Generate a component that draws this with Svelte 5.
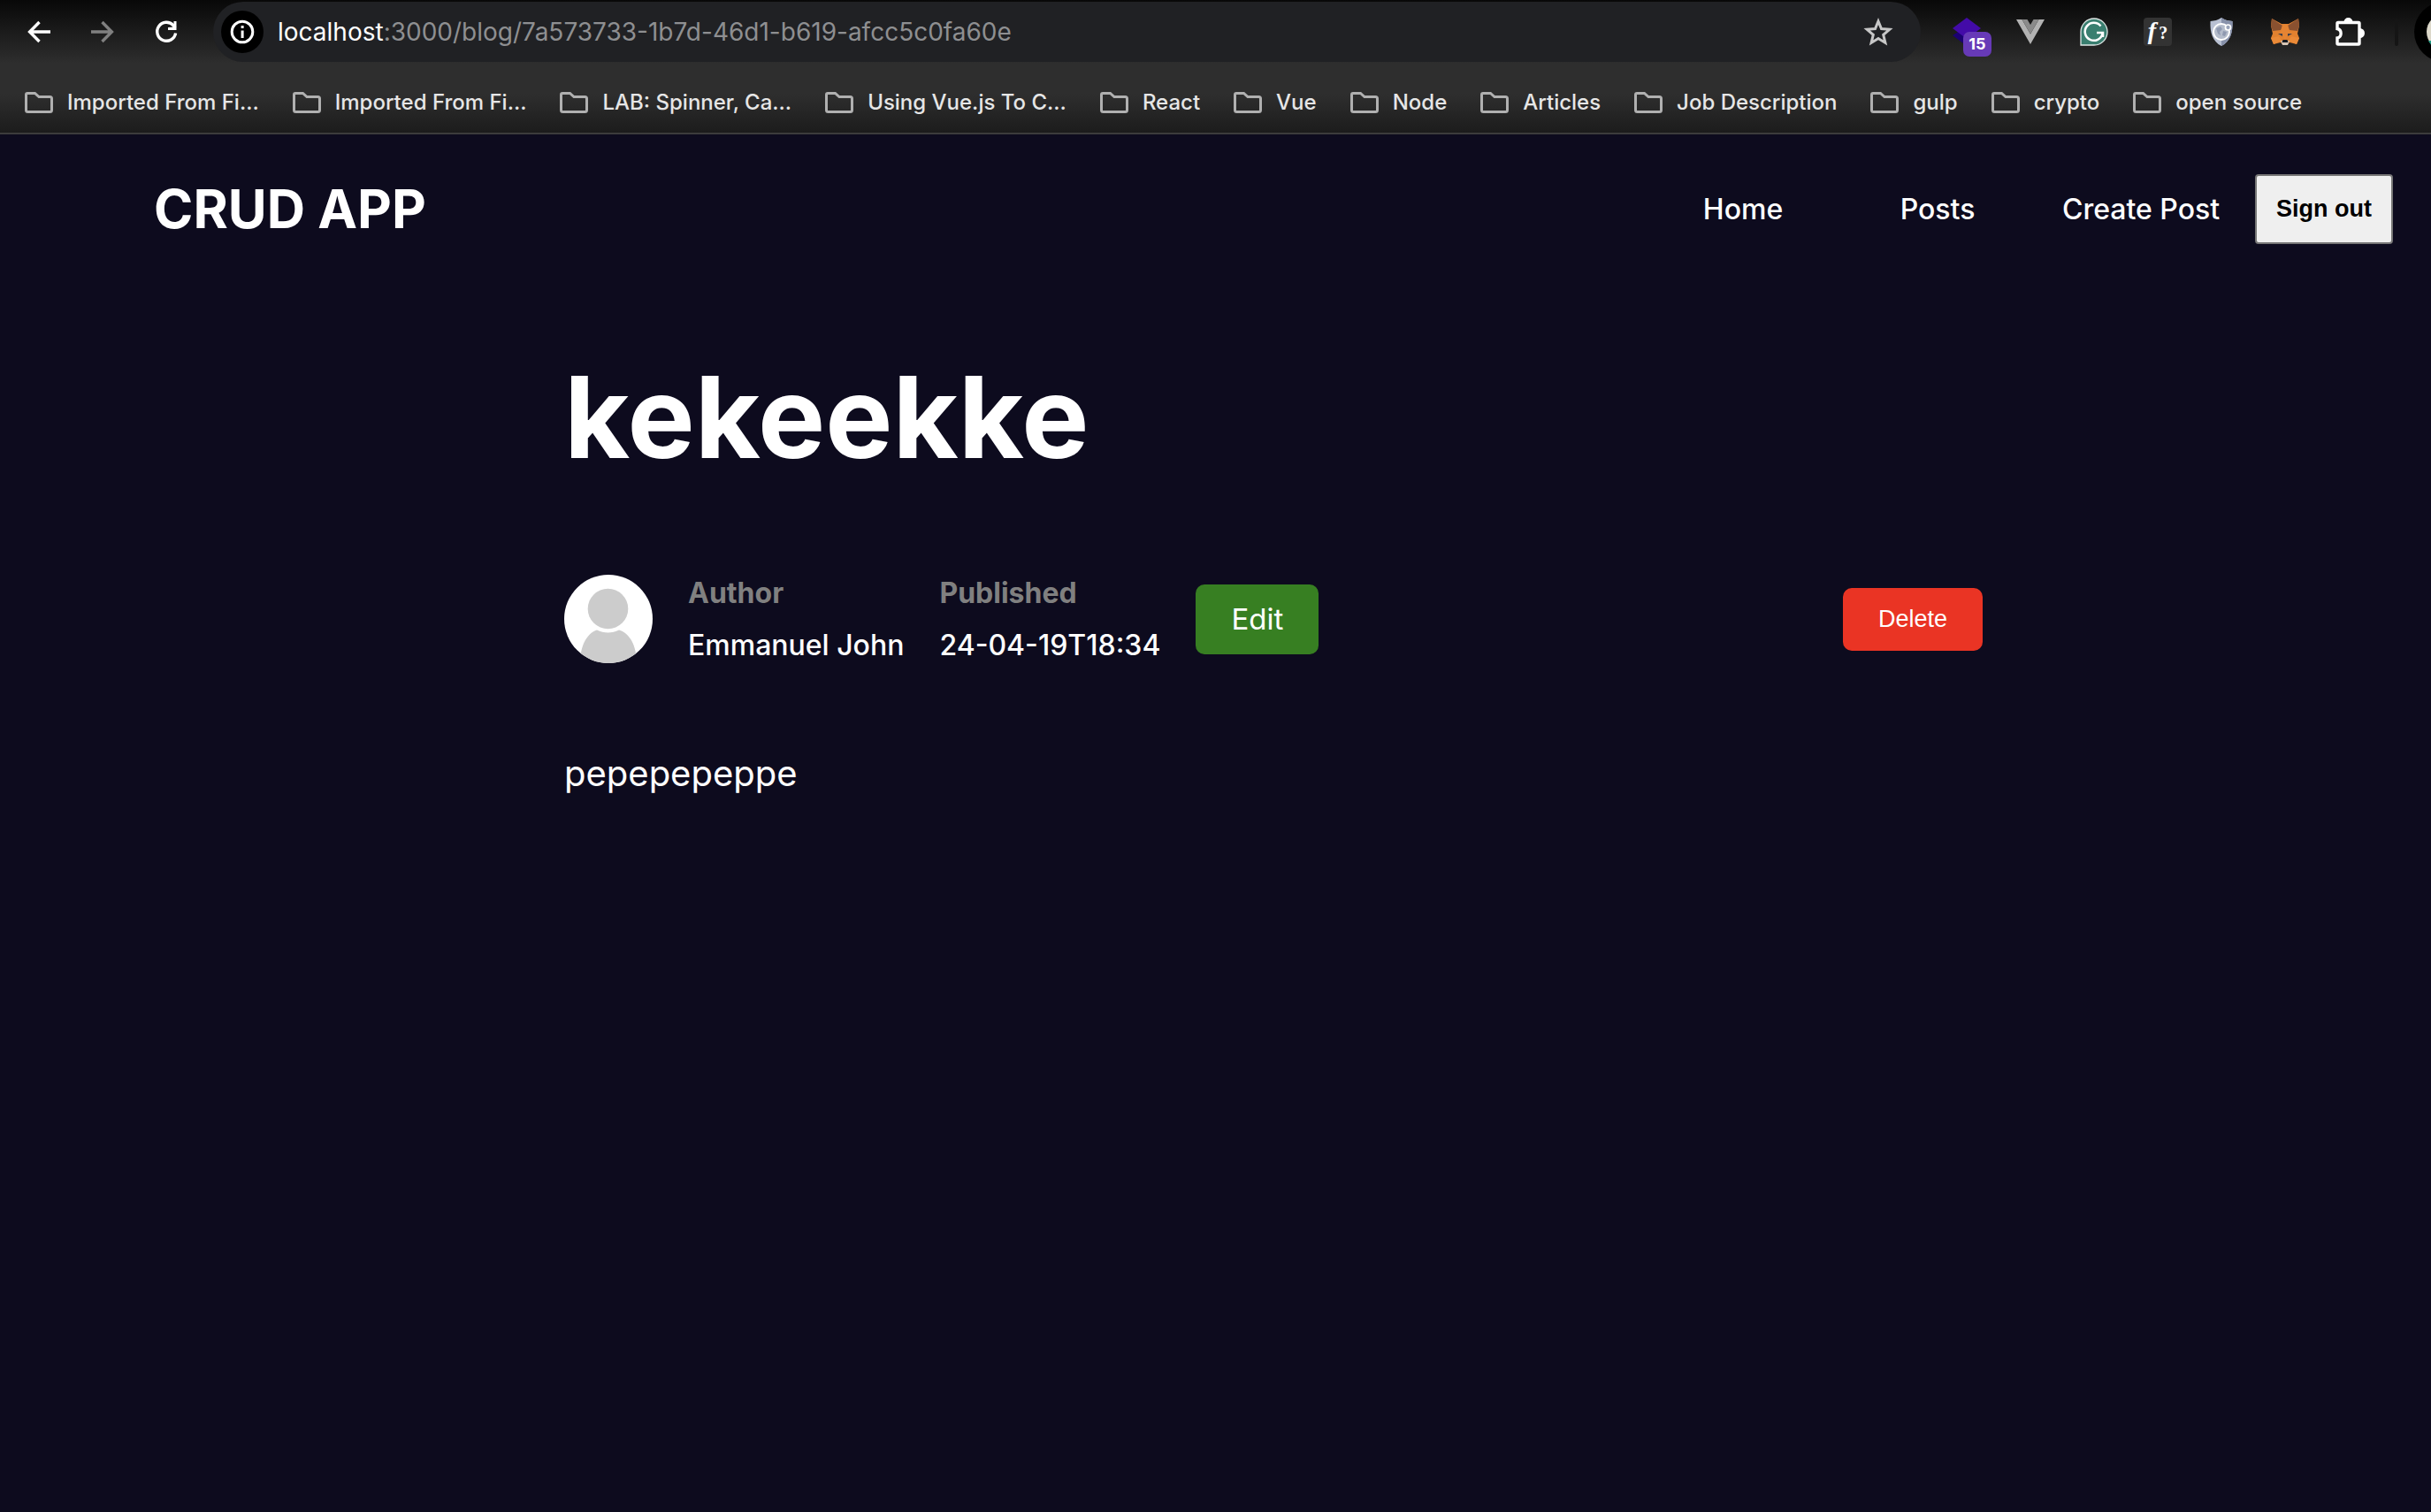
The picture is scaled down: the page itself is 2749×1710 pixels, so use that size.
<script>
  const bookmarks = [
    'Imported From Fi...',
    'Imported From Fi...',
    'LAB: Spinner, Ca...',
    'Using Vue.js To C...',
    'React',
    'Vue',
    'Node',
    'Articles',
    'Job Description',
    'gulp',
    'crypto',
    'open source'
  ];
  const post = {
    title: 'kekeekke',
    author: 'Emmanuel John',
    published: '24-04-19T18:34',
    body: 'pepepepeppe'
  };
</script>

<div class="browser">
  <div class="toolbar">
    <div class="controls">
      <button class="icon" aria-label="Back">
        <svg width="32" height="32" viewBox="0 0 32 32" fill="none" stroke="#fff" stroke-width="3.4"><path d="M29 16H6M16.5 5L5.6 16l10.900 11" /></svg>
      </button>
      <button class="icon" aria-label="Forward">
        <svg width="32" height="32" viewBox="0 0 32 32" fill="none" stroke="#808080" stroke-width="3.400"><path d="M3 16h23M15.500 5l10.900 11-10.900 11" /></svg>
      </button>
      <button class="icon" aria-label="Reload">
        <svg width="32" height="32" viewBox="0 0 32 32" fill="none" stroke="#fff" stroke-width="3.400"><path d="M26.600 17.500A10.500 10.500 0 1 1 24 8.700l2 3" /><path d="M27.500 4v10H18v-3l6.500-.5V4z" fill="#fff" stroke="none" /></svg>
      </button>
    </div>
    <div class="omnibox">
      <button class="site-info" aria-label="View site information">
        <svg width="48" height="48" viewBox="0 0 48 48"><circle cx="24" cy="24" r="24" fill="#000" /><circle cx="24" cy="24" r="11.800" fill="none" stroke="#fff" stroke-width="3" /><path d="M22.600 22.500h3V31h-3zM22.600 17h3v3h-3z" fill="#fff" /></svg>
      </button>
      <div class="url"><span class="host">localhost</span>:3000/blog/7a573733-1b7d-46d1-b619-afcc5c0fa60e</div>
      <button class="icon" aria-label="Bookmark this page">
        <svg width="34" height="34" viewBox="0 0 34 34" fill="none" stroke="#c7c7c7" stroke-width="3"><path d="M17 5l3.500 8.600 9.300.7-7.100 6 2.200 9.100L17 24.500l-7.900 4.900 2.200-9.100-7.100-6 9.300-.7z" /></svg>
      </button>
    </div>
    <div class="extensions">
      <button class="icon ext" aria-label="Layers extension, 15">
        <svg width="32" height="32" viewBox="0 0 32 32"><path d="M0 20l16-10 16 10-16 12z" fill="#1b0072" /><path d="M16 0l16 12-16 12L0 12z" fill="#430ba8" /></svg>
        <span class="badge">15</span>
      </button>
      <button class="icon ext" aria-label="Vue devtools">
        <svg width="32" height="32" viewBox="0 0 32 32"><path d="M0 2h6.500L16 18.500 25.500 2H32L16 30z" fill="#b2b2b2" /><path d="M6.500 2h6L16 8l3.500-6h6L16 18.500z" fill="#8a8a8a" /></svg>
      </button>
      <button class="icon ext" aria-label="Grammar checker">
        <svg width="32" height="32" viewBox="0 0 32 32"><path d="M1 31V16A15 15 0 1 1 16 31z" fill="#3a7f70" stroke="#dfe8e6" stroke-width="1.300" /><path d="M23.500 9.500A10 10 0 1 0 25.500 18M19 17h7v5" fill="none" stroke="#fff" stroke-width="2.500" /></svg>
      </button>
      <button class="icon ext" aria-label="What font">
        <span class="font-tile"><i>f</i>?</span>
      </button>
      <button class="icon ext" aria-label="Privacy shield">
        <svg width="32" height="32" viewBox="0 0 32 32"><path d="M16 0c4 3 8 3.500 12.500 4C29 17 26 27 16 32 6 27 3 17 3.500 4 8 3.500 12 3 16 0z" fill="#b8c0d2" /><path d="M16 1.500V0c4 3 8 3.500 12.500 4C29 17 26 27 16 32z" fill="#8791aa" /><circle cx="16" cy="16" r="9" fill="#b4bccb" stroke="#fff" stroke-width="2" /><path d="M10 12l5-2 2 3-3 3 1 4-3-2zM18 15l4 1-2 5-3-1z" fill="#8f99b0" /><circle cx="23.500" cy="11" r="3" fill="#9aa4ba" stroke="#fff" stroke-width="1.700" /></svg>
      </button>
      <button class="icon ext" aria-label="Fox wallet">
        <svg width="32" height="32" viewBox="0 0 32 32"><path d="M1 1l11 6h8l11-6 1 8-2 9 2 5-3 7-8-2-3 3h-4l-3-3-8 2-3-7 2-5-2-9z" fill="#e2812f" /><path d="M1 1l12 8-2 5-9 1L0 9zM31 1L19 9l2 5 9 1 2-6z" fill="#8a5130" /><path d="M13 8h6l2 9-5 8-5-8z" fill="#e58433" /><path d="M0 23l9-2 3 5-9 4zM32 23l-9-2-3 5 9 4z" fill="#ea8a38" /><path d="M8 18l5 0 0 3zM24 18l-5 0 0 3z" fill="#3b3f4a" /><path d="M11 26l10 0-2 5h-6z" fill="#d5c4b4" /><path d="M13.500 25h5l1 3h-7z" fill="#171a20" /></svg>
      </button>
      <button class="icon ext" aria-label="Extensions">
        <svg width="34" height="36" viewBox="0 0 34 36"><path d="M4 7.500h23a1 1 0 0 1 1 1V31a1 1 0 0 1-1 1H4a1 1 0 0 1-1-1v-6c5.500-1 5.500-9.500 0-10.500v-6a1 1 0 0 1 1-1z" fill="none" stroke="#fff" stroke-width="3.400" /><path d="M10.500 7a5 5 0 0 1 10 0zM28.500 14a5 5 0 0 1 0 11z" fill="#fff" /></svg>
      </button>
      <span class="divider"></span>
      <button class="profile" aria-label="Profile">
        <svg width="68" height="68" viewBox="0 0 68 68"><circle cx="34" cy="34" r="34" fill="#000" /><circle cx="34" cy="34" r="20" fill="#dcd8ca" /><path d="M16 44h36a20 20 0 0 1-36 0z" fill="#249c86" /></svg>
      </button>
    </div>
  </div>
  <nav class="bookmarks" aria-label="Bookmarks">
    {#each bookmarks as name}
      <a href="#bookmark">
        <svg width="34" height="26" viewBox="0 0 34 26" fill="none" stroke="#b0b0b0" stroke-width="3"><path d="M4 2.500h8.500l4.500 4h12.500a2 2 0 0 1 2 2v13a2 2 0 0 1-2 2H4.500a2 2 0 0 1-2-2V4A1.500 1.500 0 0 1 4 2.500z" /></svg>
        <span>{name}</span>
      </a>
    {/each}
  </nav>
</div>

<header>
  <a class="logo" href="#home">CRUD APP</a>
  <nav class="menu" aria-label="Main">
    <a href="#home">Home</a>
    <a href="#posts">Posts</a>
    <a class="wide" href="#create">Create Post</a>
    <button class="signout">Sign out</button>
  </nav>
</header>

<main>
  <h1>{post.title}</h1>
  <div class="meta">
    <svg class="avatar" width="100" height="100" viewBox="0 0 100 100" role="img" aria-label="Author picture">
      <defs><clipPath id="round"><circle cx="50" cy="50" r="50" /></clipPath></defs>
      <g clip-path="url(#round)">
        <rect width="100" height="100" fill="#fff" />
        <circle cx="49.500" cy="38.500" r="22.800" fill="#ccc" />
        <path d="M18 100C18 80 26 66 37 62.500c8 4 17 4 25 0C74 66 82 80 82 100z" fill="#ccc" />
      </g>
    </svg>
    <div class="field">
      <strong>Author</strong>
      <span>{post.author}</span>
    </div>
    <div class="field">
      <strong>Published</strong>
      <span>{post.published}</span>
    </div>
    <button class="edit">Edit</button>
    <button class="delete">Delete</button>
  </div>
  <p>{post.body}</p>
</main>

<style>
  :global(body) {
    background: #0d0b1e;
    color: #fff;
    font-family: Inter, sans-serif;
    overflow-x: hidden;
  }
  a {
    color: inherit;
    text-decoration: none;
  }
  button {
    font-family: inherit;
    cursor: pointer;
  }
  svg {
    display: block;
    flex: none;
  }
  .browser {
    background: linear-gradient(#080808, #2e2e2e 72px, #2e2e2e 106px, #1c1c1c);
    border-bottom: 2px solid #3c3c3c;
    overflow: hidden;
  }
  .toolbar {
    display: flex;
    align-items: center;
    padding-top: 2px;
    height: 68px;
  }
  .controls {
    display: flex;
    gap: 40px;
    padding: 0 37px 0 28px;
  }
  .icon,
  .site-info,
  .profile {
    padding: 0;
    border: 0;
    background: none;
  }
  .omnibox {
    flex: 1;
    display: flex;
    align-items: center;
    height: 68px;
    padding: 0 31px 0 9px;
    border-radius: 34px;
    background: #202124;
  }
  .url {
    flex: 1;
    padding-left: 16px;
    font-size: 28px;
    line-height: 36px;
    color: #8e8f91;
  }
  .host {
    color: #fff;
  }
  .extensions {
    display: flex;
    align-items: center;
    gap: 40px;
    margin-right: -49px;
    padding-left: 36px;
  }
  .ext {
    position: relative;
  }
  .badge {
    position: absolute;
    left: 12px;
    top: 16px;
    width: 32px;
    border-radius: 7px;
    background: #673ab7;
    color: #fff;
    font-size: 18px;
    font-weight: 700;
    line-height: 28px;
    text-align: center;
  }
  .font-tile {
    display: block;
    width: 32px;
    height: 32px;
    border-radius: 4px;
    background: #333;
    color: #fff;
    font: 700 20px/30px "Liberation Serif", serif;
  }
  .font-tile i {
    padding-right: 3px;
    font-size: 28px;
  }
  .divider {
    width: 4px;
    height: 32px;
    margin-right: -22px;
    margin-left: -6px;
    border-radius: 2px;
    background: #151515;
  }
  .bookmarks {
    display: flex;
    gap: 37px;
    padding: 28px 27px 17px;
  }
  .bookmarks a {
    display: flex;
    align-items: center;
    gap: 15px;
    color: #e6e6e6;
    font-size: 24px;
    font-weight: 500;
    line-height: 35px;
    white-space: nowrap;
  }
  header {
    display: flex;
    align-items: center;
    justify-content: space-between;
    padding: 45px 43px 0 174px;
  }
  .logo {
    font-size: 60px;
    font-weight: 700;
    line-height: 79px;
  }
  .menu {
    display: flex;
    align-items: center;
    font-size: 32px;
    font-weight: 500;
    line-height: 40px;
    text-align: center;
  }
  .menu a {
    width: 220px;
  }
  .menu .wide {
    width: 240px;
  }
  .signout {
    margin-left: 9px;
    padding: 0 22px;
    border: 2px solid #767676;
    border-radius: 4px;
    background: #efefef;
    color: #000;
    font: 700 27px/75px "Liberation Sans", sans-serif;
  }
  main {
    max-width: 1604px;
    padding: 116px 0 0 638px;
  }
  h1 {
    margin: 0;
    font-size: 128px;
    font-weight: 700;
    line-height: 160px;
  }
  .meta {
    display: flex;
    align-items: center;
    gap: 40px;
    margin-top: 98px;
  }
  .field {
    display: grid;
    gap: 19px;
    font-size: 32px;
    font-weight: 500;
    line-height: 40px;
  }
  .field strong {
    color: #808080;
    font-weight: 700;
  }
  .edit,
  .delete {
    padding: 0 40px;
    border: 0;
    border-radius: 10px;
    color: #fff;
  }
  .edit {
    background: #377f22;
    font-size: 33px;
    line-height: 79px;
  }
  .delete {
    margin-left: auto;
    background: #ea3424;
    font: 27px/71px "Liberation Sans", sans-serif;
  }
  p {
    margin: 100px 0 0;
    font-size: 40px;
    line-height: 50px;
  }
</style>
